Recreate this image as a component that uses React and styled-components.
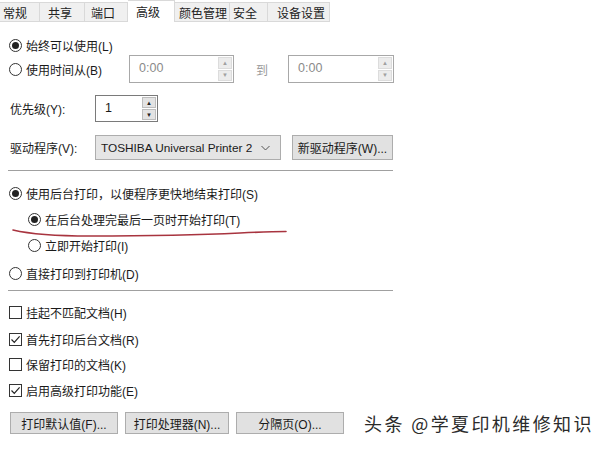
import React from "react";
import styled, { createGlobalStyle } from "styled-components";

const Global = createGlobalStyle`
  html, body { margin: 0; padding: 0; background: #fff; }
  body {
    font-family: "Liberation Sans", "Noto Sans CJK SC", sans-serif;
    font-size: 12px;
    color: #1a1a1a;
  }
`;

const Page = styled.div`
  position: relative;
  width: 600px;
  height: 450px;
  overflow: hidden;
  background: #fff;
`;

const TabStrip = styled.div`
  display: flex;
  height: 22px;
  align-items: flex-end;
`;

const Tab = styled.div`
  box-sizing: border-box;
  width: ${(p) => p.$w}px;
  height: ${(p) => (p.$active ? 22 : 20)}px;
  padding-left: ${(p) => p.$pad || 4}px;
  display: flex;
  align-items: center;
  background: ${(p) => (p.$active ? "#fff" : "#f0f0f0")};
  border: 1px solid #d9d9d9;
  border-left: none;
  border-bottom: ${(p) => (p.$active ? "none" : "1px solid #d9d9d9")};
  color: #222;
`;

const Body = styled.div`
  padding-left: 8px;
  width: 385px;
`;

const Row = styled.div`
  display: flex;
  align-items: center;
  height: ${(p) => p.$h || 20}px;
  margin-top: ${(p) => p.$top || 0}px;
  padding-left: ${(p) => p.$indent || 0}px;
`;

const Label = styled.span`
  width: ${(p) => (p.$w ? `${p.$w}px` : "auto")};
  flex: none;
  white-space: nowrap;
  color: ${(p) => (p.$dim ? "#9a9a9a" : "#1a1a1a")};
`;

const RadioDot = styled.span`
  box-sizing: border-box;
  width: 13px;
  height: 13px;
  border: 1px solid #333;
  border-radius: 50%;
  margin-right: 4px;
  flex: none;
  display: flex;
  align-items: center;
  justify-content: center;
  &::after {
    content: "";
    display: ${(p) => (p.$on ? "block" : "none")};
    width: 7px;
    height: 7px;
    border-radius: 50%;
    background: #222;
  }
`;

const CheckBox = styled.span`
  box-sizing: border-box;
  width: 13px;
  height: 13px;
  border: 1px solid #333;
  margin-left: 1px;
  margin-right: 4px;
  flex: none;
  display: flex;
  align-items: center;
  justify-content: center;
`;

const Spin = styled.div`
  box-sizing: border-box;
  width: ${(p) => p.$w}px;
  height: ${(p) => p.$h}px;
  margin-left: ${(p) => p.$ml || 0}px;
  border: 1px solid ${(p) => (p.$dim ? "#a8a8a8" : "#7a7a7a")};
  background: #fff;
  display: flex;
  flex: none;
`;

const SpinText = styled.div`
  flex: 1;
  padding: 5px 0 0 9px;
  font-size: 12.5px;
  color: ${(p) => (p.$dim ? "#8a8a8a" : "#1a1a1a")};
`;

const SpinButtons = styled.div`
  display: flex;
  flex-direction: column;
  gap: 1px;
  padding: 1px 1px 1px 0;
  width: 14px;
`;

const SpinBtn = styled.div`
  flex: 1;
  background: ${(p) => (p.$dim ? "#ececec" : "#e3e3e3")};
  border: 1px solid ${(p) => (p.$dim ? "#dcdcdc" : "#bdbdbd")};
  display: flex;
  align-items: center;
  justify-content: center;
  font-size: 6px;
  line-height: 1;
  color: ${(p) => (p.$dim ? "#a0a0a0" : "#222")};
`;

const Combo = styled.div`
  box-sizing: border-box;
  width: 186px;
  height: 25px;
  border: 1px solid #adadad;
  background: #e5e5e5;
  display: flex;
  align-items: center;
  padding: 0 10px 0 5px;
  font-size: 11.8px;
  white-space: nowrap;
  justify-content: space-between;
`;

const Button = styled.div`
  box-sizing: border-box;
  width: ${(p) => p.$w}px;
  height: ${(p) => p.$h || 22}px;
  margin-left: ${(p) => p.$ml || 0}px;
  border: 1px solid #adadad;
  background: #e1e1e1;
  display: flex;
  align-items: center;
  justify-content: center;
  flex: none;
  white-space: nowrap;
`;

const Separator = styled.div`
  height: 1px;
  background: #a0a0a0;
  margin-top: ${(p) => p.$top}px;
  width: 385px;
`;

const ButtonBar = styled.div`
  display: flex;
  align-items: center;
  margin-top: 10px;
  padding-left: 2px;
`;

const Watermark = styled.div`
  margin-left: 20px;
  font-family: "Noto Sans CJK SC", sans-serif;
  font-size: 18px;
  letter-spacing: 2.4px;
  color: #2a2a2a;
  white-space: nowrap;
`;

const RedLine = styled.svg`
  position: absolute;
  left: 0;
  top: 220px;
  pointer-events: none;
`;

const Radio = ({ on, children, ...rest }) => (
  <Row {...rest}>
    <RadioDot $on={on} />
    <Label>{children}</Label>
  </Row>
);

const Check = ({ on, children, ...rest }) => (
  <Row {...rest}>
    <CheckBox>
      {on && (
        <svg width="11" height="11" viewBox="0 0 11 11">
          <path d="M1.5 5.5 L4.3 8.3 L9.6 2.4" fill="none" stroke="#222" strokeWidth="1.2" />
        </svg>
      )}
    </CheckBox>
    <Label>{children}</Label>
  </Row>
);

const SpinBox = ({ value, dim, w, h, ml }) => (
  <Spin $w={w} $h={h} $ml={ml} $dim={dim}>
    <SpinText $dim={dim}>{value}</SpinText>
    <SpinButtons>
      <SpinBtn $dim={dim}>▲</SpinBtn>
      <SpinBtn $dim={dim}>▼</SpinBtn>
    </SpinButtons>
  </Spin>
);

const tabs = [
  { t: "常规", w: 40, pad: 3 },
  { t: "共享", w: 45, pad: 8 },
  { t: "端口", w: 43, pad: 6 },
  { t: "高级", w: 47, pad: 8, active: true },
  { t: "颜色管理", w: 55, pad: 4 },
  { t: "安全", w: 38, pad: 3 },
  { t: "设备设置", w: 62, pad: 9 },
];

const App = () => (
  <Page>
    <Global />
    <TabStrip>
      {tabs.map((tab) => (
        <Tab key={tab.t} $w={tab.w} $pad={tab.pad} $active={tab.active}>
          {tab.t}
        </Tab>
      ))}
    </TabStrip>
    <Body>
      <Radio on $top={13} $indent={1}>始终可以使用(L)</Radio>
      <Row $h={28} $top={0} $indent={1}>
        <RadioDot />
        <Label $w={100}>使用时间从(B)</Label>
        <SpinBox value="0:00" dim w={105} h={28} ml={3} />
        <Label $dim style={{ marginLeft: 22, width: 32 }}>到</Label>
        <SpinBox value="0:00" dim w={106} h={28} />
      </Row>
      <Row $h={27} $top={12} $indent={2}>
        <Label $w={85}>优先级(Y):</Label>
        <SpinBox value="1" w={63} h={27} />
      </Row>
      <Row $h={25} $top={13} $indent={2}>
        <Label $w={85}>驱动程序(V):</Label>
        <Combo>
          <span>TOSHIBA Universal Printer 2</span>
          <svg width="9" height="6" viewBox="0 0 9 6">
            <path d="M0.5 1 L4.5 5 L8.5 1" fill="none" stroke="#555" strokeWidth="1" />
          </svg>
        </Combo>
        <Button $w={101} $h={25} $ml={11}>新驱动程序(W)...</Button>
      </Row>
      <Separator $top={10} />
      <Radio on $top={12} $indent={1}>使用后台打印，以便程序更快地结束打印(S)</Radio>
      <Radio on $top={6} $indent={20}>在后台处理完最后一页时开始打印(T)</Radio>
      <Radio $top={6} $indent={20}>立即开始打印(I)</Radio>
      <Radio $top={8} $indent={1}>直接打印到打印机(D)</Radio>
      <Separator $top={7} />
      <Check $top={11}>挂起不匹配文档(H)</Check>
      <Check on $top={7}>首先打印后台文档(R)</Check>
      <Check $top={5}>保留打印的文档(K)</Check>
      <Check on $top={6}>启用高级打印功能(E)</Check>
    </Body>
    <ButtonBar>
      <Button $w={108} $ml={8}>打印默认值(F)...</Button>
      <Button $w={104} $ml={7}>打印处理器(N)...</Button>
      <Button $w={108} $ml={7}>分隔页(O)...</Button>
      <Watermark>头条 @学夏印机维修知识</Watermark>
    </ButtonBar>
    <RedLine width="300" height="24" viewBox="0 0 300 24">
      <path
        d="M13 10 C 30 14, 55 16, 90 16 C 140 16, 200 15, 240 13 C 260 12, 275 11.5, 286 11.5"
        fill="none"
        stroke="#a8343f"
        strokeWidth="1.6"
        strokeLinecap="round"
      />
    </RedLine>
  </Page>
);

export default App;
